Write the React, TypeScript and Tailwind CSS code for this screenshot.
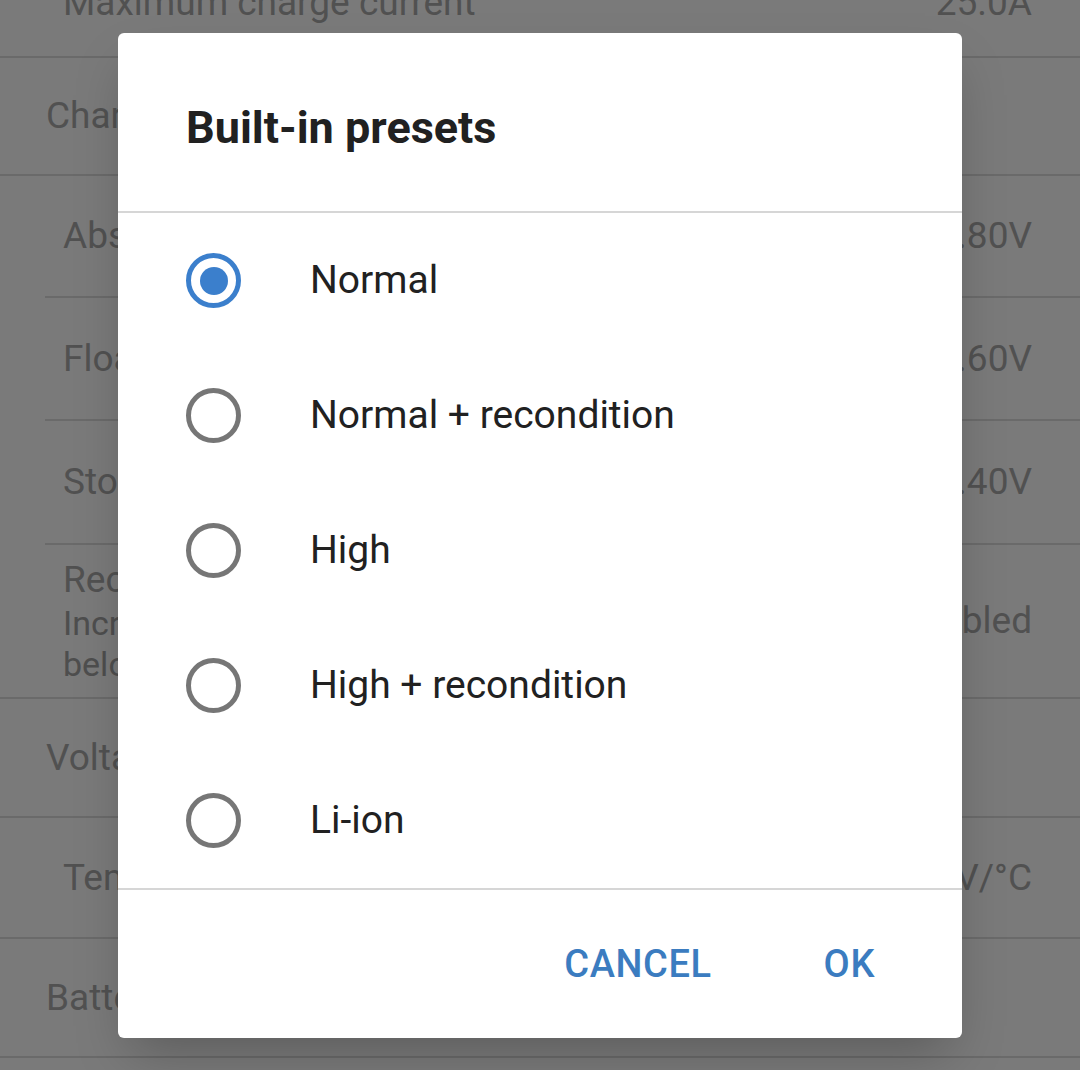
import { useState } from "react";

type Row = {
  label: string;
  sub?: string[];
  value?: string;
  kind: "header" | "item";
  inset?: boolean;
  h: string;
};

const rows: Row[] = [
  { label: "Maximum charge current", value: "25.0A", kind: "item", h: "h-[121px] pt-[12px]" },
  { label: "Charge voltages", kind: "header", h: "h-[118px]" },
  { label: "Absorption voltage", value: "14.80V", kind: "item", inset: true, h: "h-[122px]" },
  { label: "Float voltage", value: "13.60V", kind: "item", inset: true, h: "h-[123px]" },
  { label: "Storage voltage", value: "13.40V", kind: "item", inset: true, h: "h-[124px]" },
  {
    label: "Recondition voltage",
    sub: ["Increases the voltage to", "below the absorption"],
    value: "Disabled",
    kind: "item",
    h: "h-[154px]",
  },
  { label: "Voltage compensation", kind: "header", h: "h-[119px]" },
  { label: "Temperature compensation", value: "-16.20mV/°C", kind: "item", h: "h-[121px]" },
  { label: "Battery safe mode", kind: "header", h: "h-[119px]" },
  { label: "Low temperature cut-off", value: "Disabled", kind: "item", h: "h-[121px]" },
];

const presets = ["Normal", "Normal + recondition", "High", "High + recondition", "Li-ion"];

function Radio({ checked }: { checked: boolean }) {
  return (
    <div
      className={
        checked
          ? "flex size-[55px] shrink-0 items-center justify-center rounded-full border-[5px] border-[#3b7fcc]"
          : "flex size-[55px] shrink-0 items-center justify-center rounded-full border-[5px] border-[#767676]"
      }
    >
      {checked && <div className="size-[28px] rounded-full bg-[#3b7fcc]" />}
    </div>
  );
}

export default function App() {
  const [selected, setSelected] = useState(0);

  return (
    <div className="relative h-[1070px] w-[1080px] overflow-hidden bg-white font-['Roboto',sans-serif]">
      {/* settings list behind the dialog */}
      <div className="-mt-[63px] flex flex-col">
        {rows.map((row, i) => (
          <div
            key={i}
            className={
              row.inset
                ? `${row.h} ml-[45px] flex items-center justify-between border-b-2 border-[#dedede] pl-[18px] pr-[48px]`
                : row.kind === "header"
                ? `${row.h} flex items-center justify-between border-b-2 border-[#dedede] pl-[46px] pr-[48px]`
                : `${row.h} flex items-center justify-between border-b-2 border-[#dedede] pl-[63px] pr-[48px]`
            }
          >
            <div className="flex flex-col">
              <span className="text-[37px] leading-[46px] text-[#aaaaaa]">{row.label}</span>
              {row.sub?.map((s) => (
                <span key={s} className="text-[34px] leading-[41px] text-[#a4a4a4]">
                  {s}
                </span>
              ))}
            </div>
            {row.value && <span className="text-[37px] text-[#aaaaaa]">{row.value}</span>}
          </div>
        ))}
      </div>

      {/* dim + dialog */}
      <div className="absolute inset-0 flex items-start justify-center bg-black/[0.52] pt-[33px]">
        <div className="flex h-[1005px] w-[844px] flex-col overflow-hidden rounded-[6px] bg-white shadow-2xl">
          <div className="h-[178px] shrink-0 pl-[68px] pt-[71px]">
            <h2 className="text-[45px] font-bold leading-[48px] text-[#212121]">Built-in presets</h2>
          </div>
          <div className="h-[2px] bg-[#d6d6d6]" />
          <div className="flex flex-col">
            {presets.map((p, i) => (
              <button
                key={p}
                onClick={() => setSelected(i)}
                className="flex h-[135px] items-center gap-[69px] pl-[68px] text-left"
              >
                <Radio checked={selected === i} />
                <span className="text-[39px] text-[#212121]">{p}</span>
              </button>
            ))}
          </div>
          <div className="h-[2px] bg-[#d6d6d6]" />
          <div className="flex flex-1 items-center justify-end gap-[112px] pr-[87px]">
            <button className="text-[38px] font-medium tracking-[0.6px] text-[#3b7cc0]">CANCEL</button>
            <button className="text-[38px] font-medium tracking-[0.6px] text-[#3b7cc0]">OK</button>
          </div>
        </div>
      </div>
    </div>
  );
}
